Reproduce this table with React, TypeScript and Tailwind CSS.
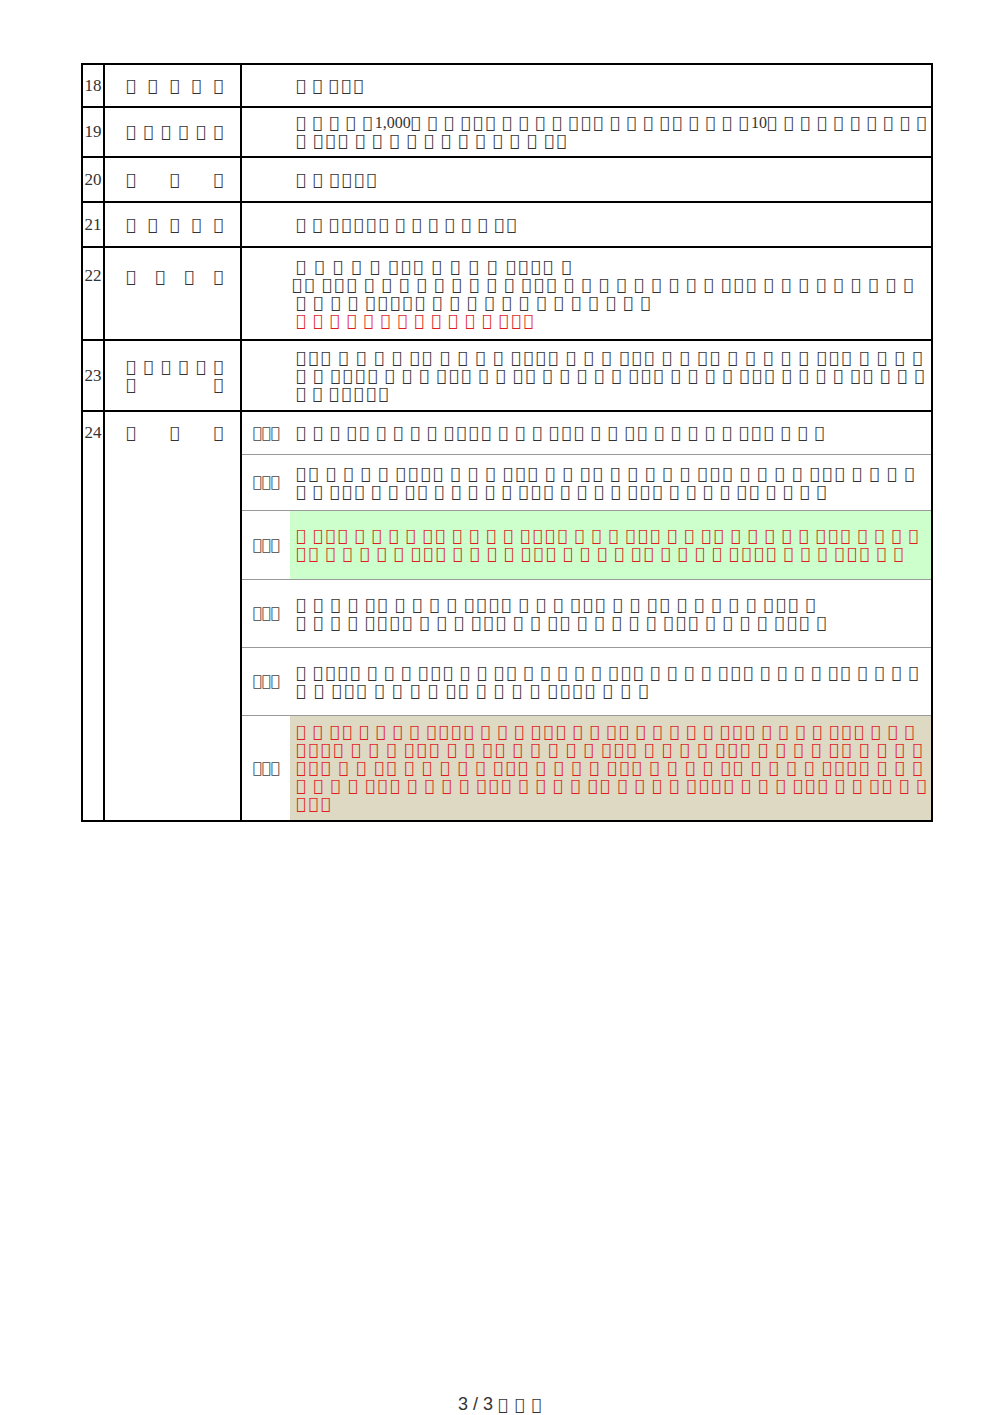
import React from "react";

const T = "\uE000";
const tf = (s: string) => s.replace(/T/g, T);

// rough glyph pitch used to size the filler lines
const ADV = 12.5;
const SP = 4;
const SIZES = [1, 1, 1, 3, 1, 1, 1, 1, 2, 1, 1, 1, 1, 4, 1, 1, 1, 3, 1, 1, 2, 1, 1, 1, 1, 1, 3, 1];

function fill(width: number, seed: number) {
  let out = "";
  let w = 0;
  let i = seed;
  for (;;) {
    const n = SIZES[i % SIZES.length];
    const add = (out ? SP : 0) + n * ADV;
    if (w + add > width - 6) break;
    out += (out ? " " : "") + T.repeat(n);
    w += add;
    i++;
  }
  return out;
}

type L = { w: string; n: number; text?: string; seed?: number; red?: boolean; shift?: boolean };

function Parts({ s }: { s: string }) {
  const bits = tf(s).split(/(\d[\d,]*)/);
  return (
    <>
      {bits.map((b, i) =>
        /\d/.test(b) ? (
          <span key={i} className="font-['Liberation_Serif',serif] text-[16px] tracking-normal">
            {b}
          </span>
        ) : (
          <React.Fragment key={i}>{b}</React.Fragment>
        )
      )}
    </>
  );
}

function Line({ l }: { l: L }) {
  return (
    <div
      className={`${l.w} leading-[18px] tracking-[2.8px] [word-spacing:-4px] text-justify [text-align-last:justify] ${
        l.red ? "text-[#e01e1e]" : ""
      }`}
    >
      {l.text ? <Parts s={l.text} /> : fill(l.n, l.seed ?? 0)}
    </div>
  );
}

function Label({ text }: { text: string }) {
  return <div className="w-[97px] leading-[18px] text-justify [text-align-last:justify]">{tf(text)}</div>;
}

const rows: { no: string; h: string; top?: boolean; label: string[]; lines: L[] }[] = [
  { no: "18", h: "h-[43px]", label: ["T T T T T"], lines: [{ w: "w-[70px]", n: 70, text: "T T TTT" }] },
  {
    no: "19",
    h: "h-[50px]",
    label: ["T T T T T T"],
    lines: [
      { w: "w-[633px]", n: 633, text: "T T T T T1,000T T T TTT T T T T TTT T T T TT T T T T10T T T T T T T T T T" },
      { w: "w-[273px]", n: 273, text: "T TTT T T T T T T T T T T T TT" },
    ],
  },
  { no: "20", h: "h-[45px]", label: ["T T T"], lines: [{ w: "w-[83px]", n: 83, text: "T T TTTT" }] },
  { no: "21", h: "h-[45px]", label: ["T T T T T"], lines: [{ w: "w-[223px]", n: 223, text: "T T TTTTT T T T T T T TT" }] },
  {
    no: "22",
    h: "h-[93px]",
    top: true,
    label: ["T T T T"],
    lines: [
      { w: "w-[278px]", n: 278, text: "T T T T T TTT T T T T TTTT T" },
      { w: "w-[624px]", n: 624, text: "TT TTT T T T T T T T T T TTT T T T T T T T T T TTT T T T T T T T T T", shift: true },
      { w: "w-[357px]", n: 357, text: "T T T T TTTTT T T T T T T T T T T T T T" },
      { w: "w-[240px]", n: 240, text: "T T T T T T T T T T T T TTT", red: true },
    ],
  },
  {
    no: "23",
    h: "h-[71px]",
    label: ["T T T T T T", "T T"],
    lines: [
      { w: "w-[629px]", n: 629, seed: 3 },
      { w: "w-[631px]", n: 631, seed: 11 },
      { w: "w-[95px]", n: 95, text: "T T TTTTT" },
    ],
  },
];

const subs: { h: string; bg: string; lines: L[]; last?: boolean }[] = [
  { h: "h-[43px]", bg: "", lines: [{ w: "w-[531px]", n: 531, seed: 5 }] },
  {
    h: "h-[56px]",
    bg: "",
    lines: [
      { w: "w-[621px]", n: 621, seed: 8 },
      { w: "w-[533px]", n: 533, seed: 15 },
    ],
  },
  {
    h: "h-[69px]",
    bg: "bg-[#ccffcc]",
    lines: [
      { w: "w-[625px]", n: 625, seed: 2, red: true },
      { w: "w-[610px]", n: 610, seed: 20, red: true },
    ],
  },
  {
    h: "h-[68px]",
    bg: "",
    lines: [
      { w: "w-[522px]", n: 522, seed: 4 },
      { w: "w-[533px]", n: 533, seed: 9 },
    ],
  },
  {
    h: "h-[68px]",
    bg: "",
    lines: [
      { w: "w-[625px]", n: 625, seed: 12 },
      { w: "w-[355px]", n: 355, seed: 1 },
    ],
  },
  {
    h: "h-[104px]",
    bg: "bg-[#ddd9c3]",
    last: true,
    lines: [
      { w: "w-[621px]", n: 621, seed: 6, red: true },
      { w: "w-[629px]", n: 629, seed: 13, red: true },
      { w: "w-[629px]", n: 629, seed: 17, red: true },
      { w: "w-[633px]", n: 633, seed: 22, red: true },
      { w: "w-[40px]", n: 40, text: "TTT", red: true },
    ],
  },
];

export default function App() {
  return (
    <div className="w-[1000px] h-[1415px] bg-white text-[#333] font-['DejaVu_Sans',sans-serif] text-[16px]">
      <div className="pt-[63px] pl-[81px]">
        <div className="w-[852px] border-2 border-black">
          {rows.map((r) => (
            <div key={r.no} className={`flex ${r.h} border-b-2 border-black`}>
              <div
                className={`w-[22px] border-r-2 border-black flex justify-center font-['Liberation_Serif',serif] text-[17px] leading-[18px] ${
                  r.top ? "items-start pt-[19px]" : "items-center"
                }`}
              >
                {r.no}
              </div>
              <div
                className={`w-[137px] border-r-2 border-black flex flex-col pl-[21px] ${
                  r.top ? "justify-start pt-[20px]" : "justify-center"
                }`}
              >
                {r.label.map((t, i) => (
                  <Label key={i} text={t} />
                ))}
              </div>
              <div className="flex-1 flex flex-col justify-center pl-[54px]">
                {r.lines.map((l, i) => (
                  <div key={i} className={l.shift ? "-ml-[4px]" : ""}>
                    <Line l={l} />
                  </div>
                ))}
              </div>
            </div>
          ))}
          <div className="flex h-[408px]">
            <div className="w-[22px] border-r-2 border-black flex justify-center font-['Liberation_Serif',serif] text-[17px] leading-[18px] pt-[12px]">
              24
            </div>
            <div className="w-[137px] border-r-2 border-black flex flex-col pl-[21px] pt-[12px]">
              <Label text="T T T" />
            </div>
            <div className="flex-1 flex flex-col">
              {subs.map((s, i) => (
                <div key={i} className={`flex ${s.h} ${s.last ? "" : "border-b border-[#9a9a9a]"}`}>
                  <div className="w-[48px] flex items-center justify-center text-[15px] text-[#444]">
                    {tf("TTT")}
                  </div>
                  <div className={`flex-1 flex flex-col justify-center pl-[6px] ${s.bg}`}>
                    {s.lines.map((l, j) => (
                      <Line key={j} l={l} />
                    ))}
                  </div>
                </div>
              ))}
            </div>
          </div>
        </div>
      </div>
      <div className="mt-[573px] text-center leading-[18px] text-[#333]">
        <span className="font-['Liberation_Sans',sans-serif] text-[18px]">3 / 3 </span>
        <span className="tracking-[1px]">{tf("T T T")}</span>
      </div>
    </div>
  );
}
